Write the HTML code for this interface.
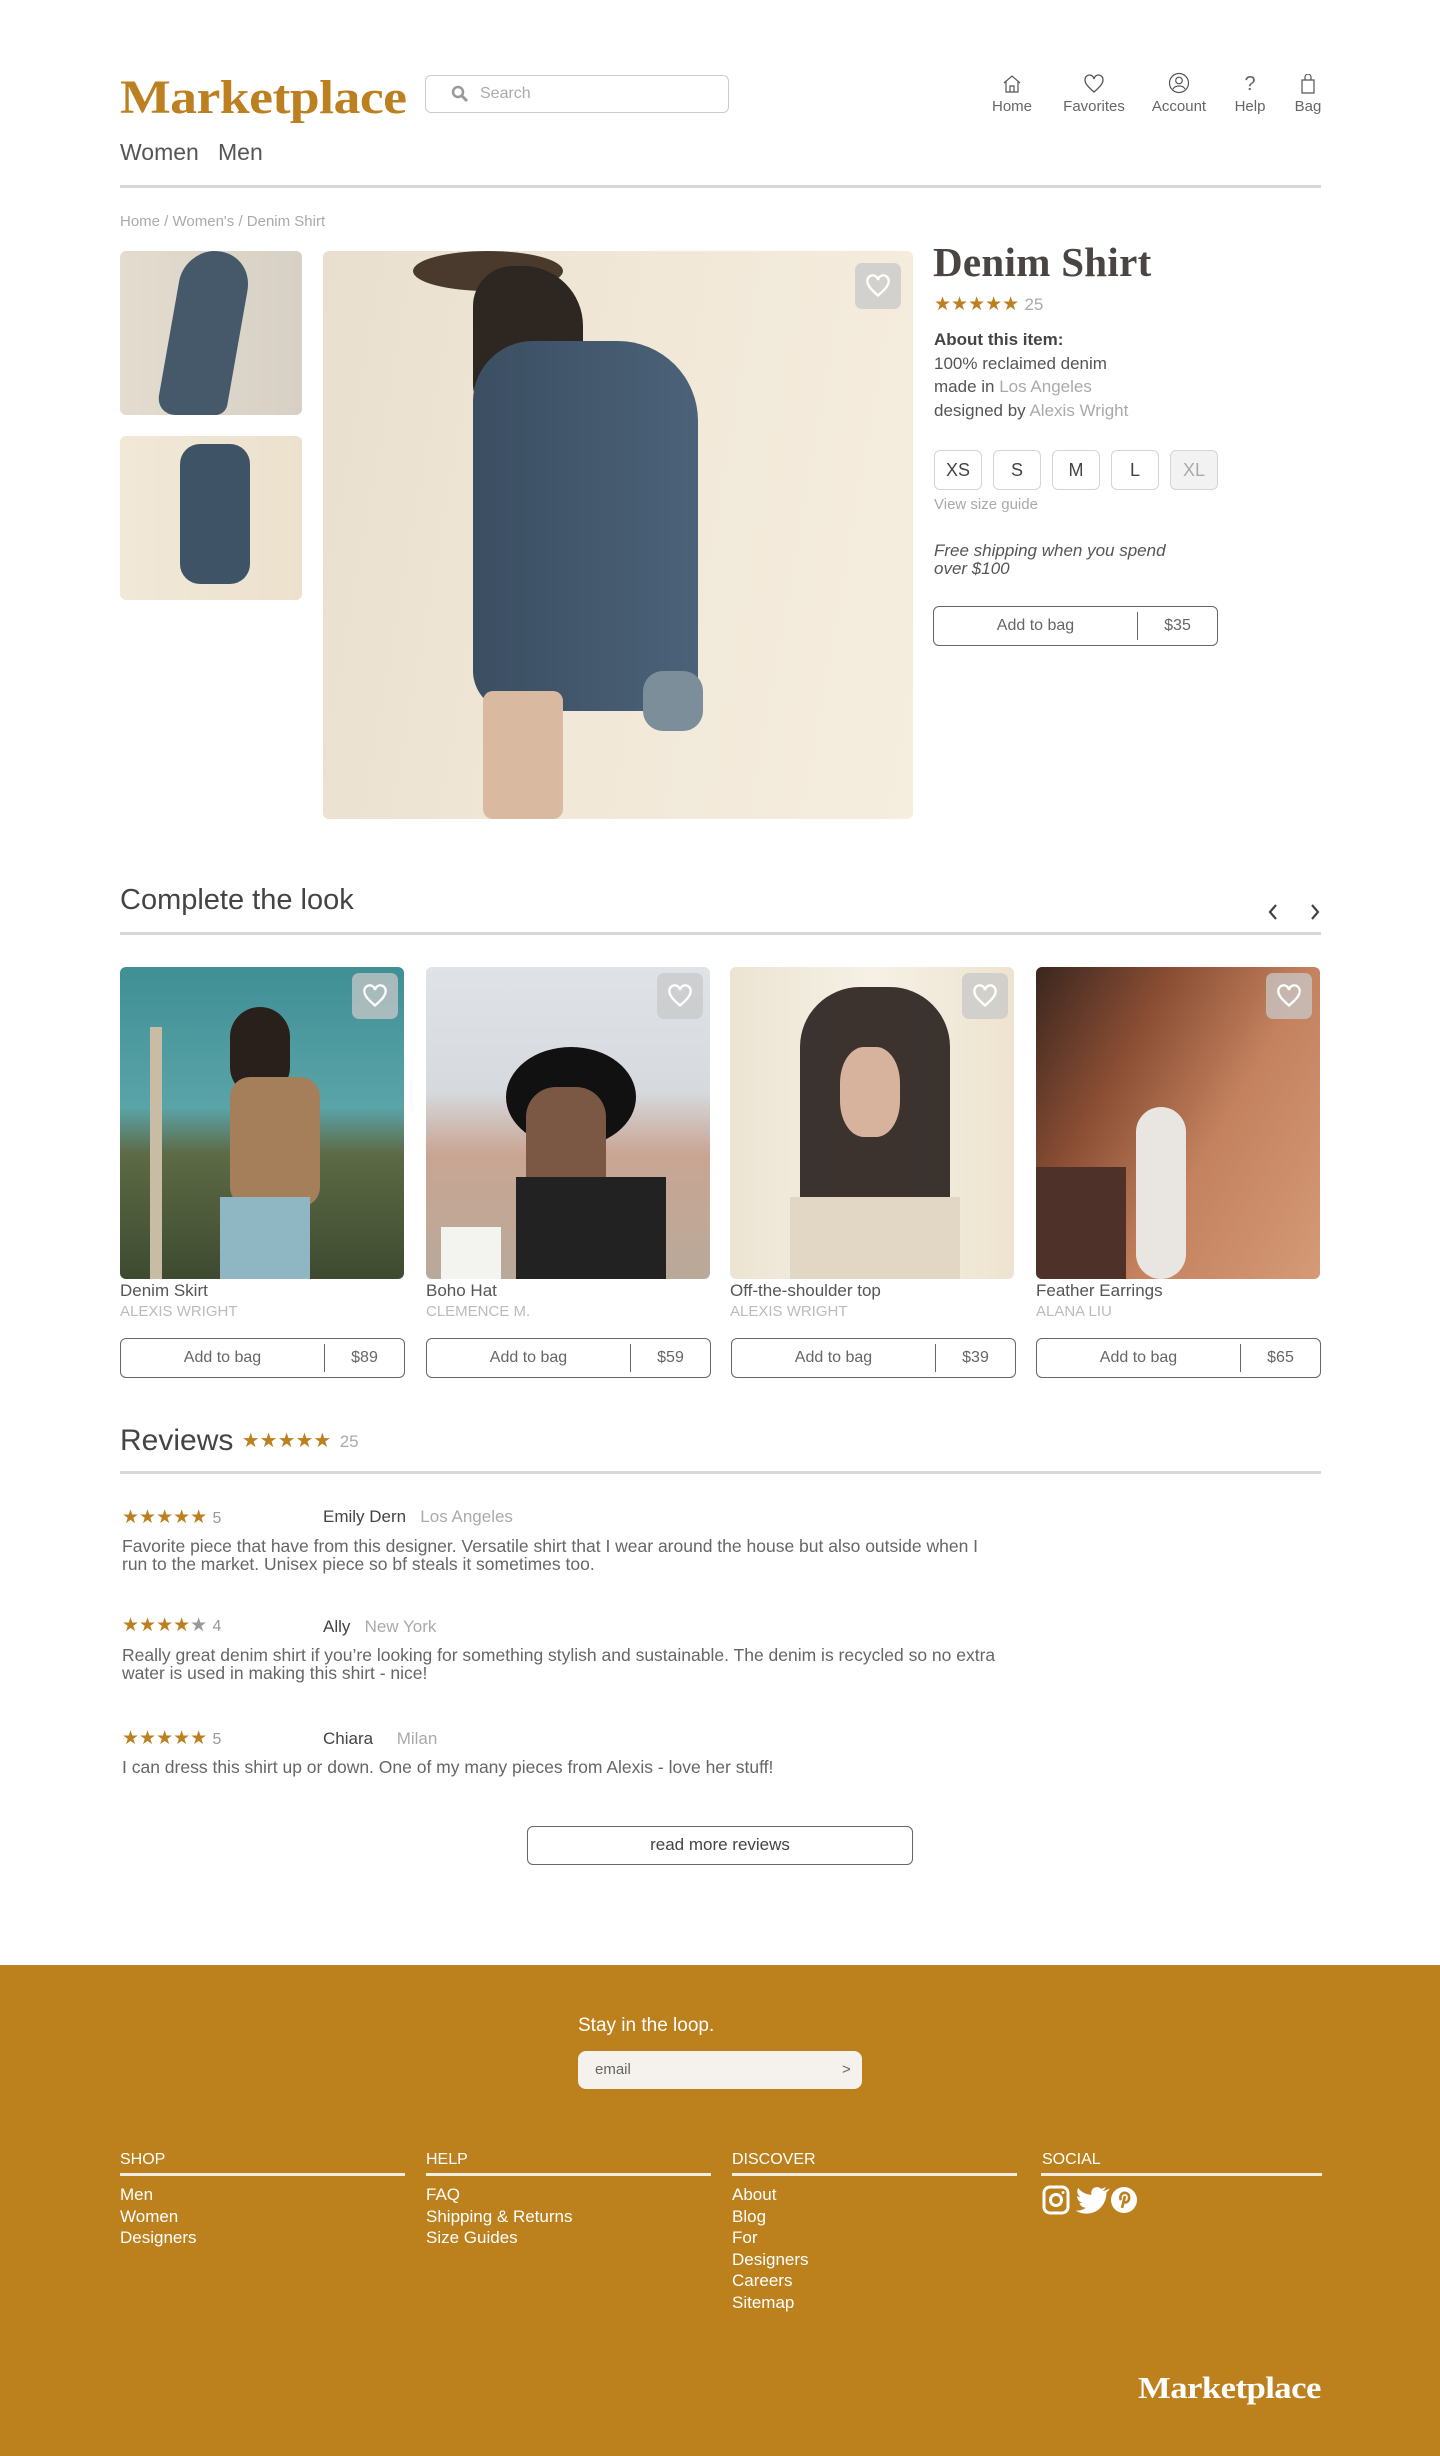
<!DOCTYPE html>
<html><head><meta charset="utf-8">
<style>
*{margin:0;padding:0;box-sizing:border-box}
body{width:1440px;height:2456px;position:relative;background:#fff;font-family:"Liberation Sans",sans-serif;color:#555;overflow:hidden}
.a{position:absolute}
.logo{font-family:"Liberation Serif",serif;font-weight:bold;color:#bd8020;letter-spacing:-0.5px;transform-origin:left top}
.nav{top:74px;text-align:center;font-size:15px;color:#666}
.nav svg{display:block;margin:0 auto 4px}
.btn{border:1.5px solid #666;border-radius:6px;display:flex;align-items:center;font-size:16px;color:#666}
.btn .l{flex:1;text-align:center}
.btn .r{border-left:1.5px solid #666;height:28px;line-height:28px;text-align:center}
.heart{width:46px;height:46px;border-radius:7px;background:rgba(200,200,200,.75);display:flex;align-items:center;justify-content:center}
.star{color:#bd8020;letter-spacing:0}
.sz{width:48px;height:40px;border:1.5px solid #d5d5d5;border-radius:6px;text-align:center;line-height:38px;font-size:18px;color:#444}
.hr{height:3px;background:#d8d8d8}
.cimg{width:284px;height:312px;border-radius:6px;overflow:hidden}
.fh{font-size:16px;color:#fff}
.fl{font-size:17px;color:#fff;line-height:21.6px}
.rv{font-size:17.5px;line-height:18px;color:#666;width:880px}
</style></head><body>

<div class="a logo" style="left:120px;top:70px;font-size:48px;transform:scaleX(1.12)">Marketplace</div>
<div class="a" style="left:425px;top:75px;width:304px;height:38px;border:1.5px solid #ccc;border-radius:6px">
 <svg class="a" style="left:25px;top:9px" width="18" height="18" viewBox="0 0 18 18"><circle cx="7" cy="7" r="5" fill="none" stroke="#999" stroke-width="2.5"/><path d="M11 11l5 5" stroke="#999" stroke-width="3"/></svg>
 <span class="a" style="left:54px;top:9px;font-size:16px;color:#aaa">Search</span>
</div>

<div class="a nav" style="left:988px;width:48px"><svg width="20" height="20" viewBox="0 0 20 20"><path d="M2 9L10 2l8 7M4 8v10h12V8M8 18v-6h4v6" fill="none" stroke="#555" stroke-width="1.2"/></svg>Home</div>
<div class="a nav" style="left:1056px;width:76px"><svg width="22" height="20" viewBox="0 0 22 20"><path d="M11 18C4 12 2 9 2 6a4.5 4.5 0 0 1 9-1 4.5 4.5 0 0 1 9 1c0 3-2 6-9 12z" fill="none" stroke="#555" stroke-width="1.3"/></svg>Favorites</div>
<div class="a nav" style="left:1144px;width:70px;top:72px"><svg width="22" height="22" viewBox="0 0 22 22"><circle cx="11" cy="11" r="9.5" fill="none" stroke="#555" stroke-width="1.2"/><circle cx="11" cy="8.5" r="3.3" fill="none" stroke="#555" stroke-width="1.2"/><path d="M5 17c2-4 10-4 12 0" fill="none" stroke="#555" stroke-width="1.2"/></svg>Account</div>
<div class="a nav" style="left:1230px;width:40px"><div style="font-size:20px;height:24px;line-height:20px">?</div>Help</div>
<div class="a nav" style="left:1290px;width:36px"><svg width="16" height="20" viewBox="0 0 16 20"><path d="M2 6h12v13H2zM5 6V3a3 3 0 0 1 6 0v3" fill="none" stroke="#555" stroke-width="1.2"/></svg>Bag</div>

<div class="a" style="left:120px;top:139px;font-size:23px;color:#555">Women&nbsp;&nbsp;&nbsp;Men</div>
<div class="a hr" style="left:120px;top:185px;width:1201px"></div>
<div class="a" style="left:120px;top:213px;font-size:15px;color:#aaa">Home / Women's / Denim Shirt</div>

<div class="a" style="left:120px;top:251px;width:182px;height:164px;border-radius:6px;overflow:hidden;background:linear-gradient(90deg,#e3dccf,#d7d0c4)">
 <div class="a" style="left:50px;top:0;width:70px;height:164px;background:#45596b;border-radius:30px 40px 10px 20px;transform:skewX(-10deg)"></div>
</div>
<div class="a" style="left:120px;top:436px;width:182px;height:164px;border-radius:6px;overflow:hidden;background:linear-gradient(90deg,#f1e8d8,#ece1cd)">
 <div class="a" style="left:60px;top:8px;width:70px;height:140px;background:#3f5366;border-radius:20px"></div>
</div>
<div class="a" style="left:323px;top:251px;width:590px;height:568px;border-radius:6px;overflow:hidden;background:linear-gradient(100deg,#e9dfcf 0%,#f1e8d8 50%,#f5edde 100%)">
 <div class="a" style="left:90px;top:0;width:150px;height:40px;background:#4a3a2e;border-radius:50%"></div>
 <div class="a" style="left:150px;top:15px;width:110px;height:140px;background:#2e2620;border-radius:40px 60px 30px 20px"></div>
 <div class="a" style="left:150px;top:90px;width:225px;height:370px;background:linear-gradient(90deg,#3b4e62,#4b6278);border-radius:60px 80px 30px 40px"></div>
 <div class="a" style="left:160px;top:440px;width:80px;height:128px;background:#d9b9a0;border-radius:10px"></div>
 <div class="a" style="left:320px;top:420px;width:60px;height:60px;background:#7c8e9a;border-radius:20px"></div>
 <div class="a heart" style="left:532px;top:12px"><svg width="26" height="24" viewBox="0 0 22 20"><path d="M11 18C4 12 2 9 2 6a4.5 4.5 0 0 1 9-1 4.5 4.5 0 0 1 9 1c0 3-2 6-9 12z" fill="none" stroke="#fff" stroke-width="2"/></svg></div>
</div>

<div class="a" style="left:933px;top:238px;font-family:'Liberation Serif',serif;font-size:41px;font-weight:bold;color:#4a4442;letter-spacing:0.3px">Denim Shirt</div>
<div class="a" style="left:934px;top:293px;font-size:19px"><span class="star">★★★★★</span> <span style="color:#aaa;font-size:17px">25</span></div>
<div class="a" style="left:934px;top:328px;font-size:17px;line-height:23.5px;color:#555">
<b style="color:#444">About this item:</b><br>100% reclaimed denim<br>made in <span style="color:#aaa">Los Angeles</span><br>designed by <span style="color:#aaa">Alexis Wright</span></div>
<div class="a sz" style="left:934px;top:450px">XS</div>
<div class="a sz" style="left:993px;top:450px">S</div>
<div class="a sz" style="left:1052px;top:450px">M</div>
<div class="a sz" style="left:1111px;top:450px">L</div>
<div class="a sz" style="left:1170px;top:450px;background:#f2f2f2;color:#aaa">XL</div>
<div class="a" style="left:934px;top:496px;font-size:15px;color:#aaa">View size guide</div>
<div class="a" style="left:934px;top:542px;font-size:17px;line-height:18px;font-style:italic;color:#555">Free shipping when you spend<br>over $100</div>
<div class="a btn" style="left:933px;top:606px;width:285px;height:40px"><span class="l">Add to bag</span><span class="r" style="width:80px">$35</span></div>

<div class="a" style="left:120px;top:884px;font-size:29px;color:#444">Complete the look</div>
<svg class="a" style="left:1264px;top:902px" width="60" height="20" viewBox="0 0 60 20"><path d="M12 3L6 10l6 7M48 3l6 7-6 7" fill="none" stroke="#444" stroke-width="2.2"/></svg>
<div class="a hr" style="left:120px;top:932px;width:1201px"></div>

<div class="a cimg" style="left:120px;top:967px;background:linear-gradient(180deg,#3f8f95 0%,#5aa4a8 45%,#5d6a45 60%,#3d4a30 100%)">
 <div class="a" style="left:110px;top:40px;width:60px;height:90px;background:#2a201b;border-radius:30px"></div>
 <div class="a" style="left:110px;top:110px;width:90px;height:130px;background:#a57f5a;border-radius:20px"></div>
 <div class="a" style="left:100px;top:230px;width:90px;height:82px;background:#8fb7c3"></div>
 <div class="a" style="left:30px;top:60px;width:12px;height:252px;background:#c9bca5"></div>
</div>
<div class="a cimg" style="left:426px;top:967px;background:linear-gradient(180deg,#dfe3e8 0%,#d6d9dd 40%,#c9a593 60%,#b8a999 100%)">
 <div class="a" style="left:80px;top:80px;width:130px;height:100px;background:#111;border-radius:50%"></div>
 <div class="a" style="left:100px;top:120px;width:80px;height:120px;background:#7a5844;border-radius:30px"></div>
 <div class="a" style="left:90px;top:210px;width:150px;height:102px;background:#222"></div>
 <div class="a" style="left:15px;top:260px;width:60px;height:52px;background:#f3f3f0"></div>
</div>
<div class="a cimg" style="left:730px;top:967px;background:linear-gradient(90deg,#ece4d2,#f6f1e6 50%,#ede3cf)">
 <div class="a" style="left:70px;top:20px;width:150px;height:260px;background:#2b231f;border-radius:60px 60px 40px 40px;opacity:.92"></div>
 <div class="a" style="left:110px;top:80px;width:60px;height:90px;background:#d7b29c;border-radius:40%"></div>
 <div class="a" style="left:60px;top:230px;width:170px;height:82px;background:#e2d7c4"></div>
</div>
<div class="a cimg" style="left:1036px;top:967px;background:linear-gradient(120deg,#3a261f 0%,#8a4e34 30%,#c4825f 60%,#d59a76 100%)">
 <div class="a" style="left:100px;top:140px;width:50px;height:172px;background:#e9e6e1;border-radius:25px"></div>
 <div class="a" style="left:0;top:200px;width:90px;height:112px;background:#4e3128"></div>
</div>
<div class="a heart" style="left:352px;top:973px"><svg width="26" height="24" viewBox="0 0 22 20"><path d="M11 18C4 12 2 9 2 6a4.5 4.5 0 0 1 9-1 4.5 4.5 0 0 1 9 1c0 3-2 6-9 12z" fill="none" stroke="#fff" stroke-width="2"/></svg></div>
<div class="a heart" style="left:657px;top:973px"><svg width="26" height="24" viewBox="0 0 22 20"><path d="M11 18C4 12 2 9 2 6a4.5 4.5 0 0 1 9-1 4.5 4.5 0 0 1 9 1c0 3-2 6-9 12z" fill="none" stroke="#fff" stroke-width="2"/></svg></div>
<div class="a heart" style="left:962px;top:973px"><svg width="26" height="24" viewBox="0 0 22 20"><path d="M11 18C4 12 2 9 2 6a4.5 4.5 0 0 1 9-1 4.5 4.5 0 0 1 9 1c0 3-2 6-9 12z" fill="none" stroke="#fff" stroke-width="2"/></svg></div>
<div class="a heart" style="left:1266px;top:973px"><svg width="26" height="24" viewBox="0 0 22 20"><path d="M11 18C4 12 2 9 2 6a4.5 4.5 0 0 1 9-1 4.5 4.5 0 0 1 9 1c0 3-2 6-9 12z" fill="none" stroke="#fff" stroke-width="2"/></svg></div>

<div class="a" style="left:120px;top:1281px;font-size:17px;line-height:20px">Denim Skirt<br><span style="font-size:15px;color:#bbb">ALEXIS WRIGHT</span></div>
<div class="a" style="left:426px;top:1281px;font-size:17px;line-height:20px">Boho Hat<br><span style="font-size:15px;color:#bbb">CLEMENCE M.</span></div>
<div class="a" style="left:730px;top:1281px;font-size:17px;line-height:20px">Off-the-shoulder top<br><span style="font-size:15px;color:#bbb">ALEXIS WRIGHT</span></div>
<div class="a" style="left:1036px;top:1281px;font-size:17px;line-height:20px">Feather Earrings<br><span style="font-size:15px;color:#bbb">ALANA LIU</span></div>

<div class="a btn" style="left:120px;top:1338px;width:285px;height:40px"><span class="l">Add to bag</span><span class="r" style="width:80px">$89</span></div>
<div class="a btn" style="left:426px;top:1338px;width:285px;height:40px"><span class="l">Add to bag</span><span class="r" style="width:80px">$59</span></div>
<div class="a btn" style="left:731px;top:1338px;width:285px;height:40px"><span class="l">Add to bag</span><span class="r" style="width:80px">$39</span></div>
<div class="a btn" style="left:1036px;top:1338px;width:285px;height:40px"><span class="l">Add to bag</span><span class="r" style="width:80px">$65</span></div>

<div class="a" style="left:120px;top:1424px;font-size:30px;color:#444">Reviews <span class="star" style="font-size:20px;vertical-align:3px">★★★★★</span> <span style="font-size:17px;color:#aaa;vertical-align:3px">25</span></div>
<div class="a hr" style="left:120px;top:1471px;width:1201px"></div>

<div class="a" style="left:122px;top:1506px;font-size:19px"><span class="star">★★★★★</span> <span style="font-size:16px;color:#999">5</span></div>
<div class="a" style="left:323px;top:1507px;font-size:17px;color:#444">Emily Dern&nbsp;&nbsp;&nbsp;<span style="color:#aaa">Los Angeles</span></div>
<div class="a rv" style="left:122px;top:1537px">Favorite piece that have from this designer. Versatile shirt that I wear around the house but also outside when I run to the market. Unisex piece so bf steals it sometimes too.</div>

<div class="a" style="left:122px;top:1614px;font-size:19px"><span class="star">★★★★</span><span style="color:#999">★</span> <span style="font-size:16px;color:#999">4</span></div>
<div class="a" style="left:323px;top:1617px;font-size:17px;color:#444">Ally&nbsp;&nbsp;&nbsp;<span style="color:#aaa">New York</span></div>
<div class="a rv" style="left:122px;top:1646px">Really great denim shirt if you’re looking for something stylish and sustainable. The denim is recycled so no extra water is used in making this shirt - nice!</div>

<div class="a" style="left:122px;top:1727px;font-size:19px"><span class="star">★★★★★</span> <span style="font-size:16px;color:#999">5</span></div>
<div class="a" style="left:323px;top:1729px;font-size:17px;color:#444">Chiara&nbsp;&nbsp;&nbsp;&nbsp;&nbsp;<span style="color:#aaa">Milan</span></div>
<div class="a rv" style="left:122px;top:1758px">I can dress this shirt up or down. One of my many pieces from Alexis - love her stuff!</div>

<div class="a" style="left:527px;top:1826px;width:386px;height:39px;border:1.5px solid #666;border-radius:6px;text-align:center;line-height:36px;font-size:17px;color:#444">read more reviews</div>

<div class="a" style="left:0;top:1965px;width:1440px;height:491px;background:#bc801d">
 <div class="a" style="left:578px;top:50px;font-size:19px;color:#fff">Stay in the loop.</div>
 <div class="a" style="left:578px;top:86px;width:284px;height:38px;background:#f5f2ee;border-radius:8px">
  <span class="a" style="left:17px;top:10px;font-size:15px;color:#666">email</span>
  <span class="a" style="left:264px;top:10px;font-size:15px;color:#666">&gt;</span>
 </div>
 <div class="a fh" style="left:120px;top:186px">SHOP</div>
 <div class="a fh" style="left:426px;top:186px">HELP</div>
 <div class="a fh" style="left:732px;top:186px">DISCOVER</div>
 <div class="a fh" style="left:1042px;top:186px">SOCIAL</div>
 <div class="a" style="left:120px;top:208px;width:285px;height:3px;background:#f3ece0"></div>
 <div class="a" style="left:426px;top:208px;width:285px;height:3px;background:#f3ece0"></div>
 <div class="a" style="left:732px;top:208px;width:285px;height:3px;background:#f3ece0"></div>
 <div class="a" style="left:1041px;top:208px;width:281px;height:3px;background:#f3ece0"></div>
 <div class="a fl" style="left:120px;top:219px">Men<br>Women<br>Designers</div>
 <div class="a fl" style="left:426px;top:219px">FAQ<br>Shipping &amp; Returns<br>Size Guides</div>
 <div class="a fl" style="left:732px;top:219px">About<br>Blog<br>For<br>Designers<br>Careers<br>Sitemap</div>
 <svg class="a" style="left:1042px;top:219px" width="100" height="32" viewBox="0 0 100 32">
  <rect x="2" y="3" width="24" height="26" rx="6" fill="none" stroke="#fff" stroke-width="3"/><circle cx="14" cy="16" r="5.5" fill="none" stroke="#fff" stroke-width="3"/><circle cx="21" cy="8.5" r="1.5" fill="#fff"/>
  <path d="M64 6c-1.5.8-3 1.2-4.5 1.4 1.6-1 2.8-2.4 3.3-4.2-1.5.9-3.2 1.6-4.9 1.9-3-3.3-8.6-2-10 2.4-.4 1.3-.4 2.6 0 3.9-6-.3-11-3-14-7.3-1.9 3.3-.9 7.5 2.2 9.6-1.2 0-2.3-.4-3.4-.9 0 3.5 2.4 6.4 5.8 7.1-1.1.3-2.2.3-3.3.1.9 2.9 3.6 5 6.7 5-3 2.3-6.7 3.4-10.5 3 3.3 2.1 7.1 3.2 11 3.2 13.8 0 21.6-11.8 21.2-22.4 1.5-1.1 2.7-2.4 3.7-3.9z" fill="#fff" transform="translate(4,0) scale(0.95)"/>
  <circle cx="82" cy="16" r="13" fill="#fff"/><path d="M80 24l3-12M79 16c-2-4 1-8 5-7 4 1 4 7 1 9-2 1-4 0-3-2" fill="none" stroke="#bc801d" stroke-width="2.6"/>
 </svg>
 <div class="a logo" style="left:1138px;top:405px;font-size:31px;color:#fff;transform:scaleX(1.12)">Marketplace</div>
</div>
</body></html>
